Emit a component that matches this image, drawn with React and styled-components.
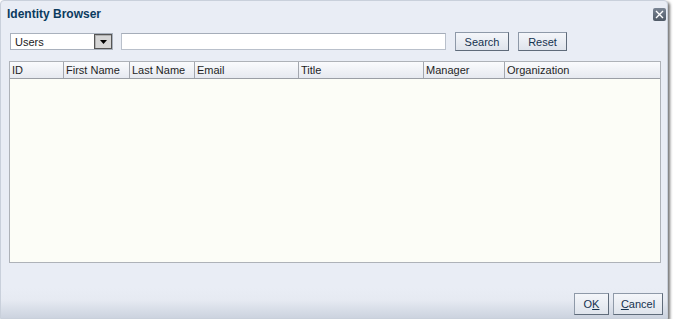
import React from "react";
import styled, { createGlobalStyle } from "styled-components";

const Global = createGlobalStyle`
  html, body { margin: 0; padding: 0; background: #ffffff; }
  body { font-family: "Liberation Sans", Arial, sans-serif; font-size: 11px; }
`;

const Dialog = styled.div`
  box-sizing: border-box;
  width: 668px;
  height: 319px;
  background: #e9edf5;
  border: 1px solid #c9d0db;
  border-radius: 4px 4px 0 0;
  box-shadow: 2px 2px 3px rgba(0, 0, 0, 0.55);
  display: flex;
  flex-direction: column;
  overflow: hidden;
`;

const TitleBar = styled.div`
  height: 25px;
  display: flex;
  align-items: center;
  justify-content: space-between;
  padding: 0 1px 0 6px;
  flex: none;
`;

const Title = styled.div`
  font-weight: bold;
  font-size: 12px;
  color: #0b3b5e;
`;

const CloseButton = styled.div`
  width: 13px;
  height: 13px;
  background: linear-gradient(#7a8594, #4f5966);
  border-radius: 2px;
  display: flex;
  align-items: center;
  justify-content: center;
  margin-top: 1px;
`;

const Toolbar = styled.div`
  display: flex;
  align-items: center;
  margin: 6px 0 0 9px;
  height: 19px;
  flex: none;
`;

const Select = styled.div`
  box-sizing: border-box;
  width: 103px;
  height: 17px;
  background: #ffffff;
  border: 1px solid #a9b1bd;
  display: flex;
  align-items: center;
  justify-content: space-between;
  padding-left: 4px;
  color: #1a1a1a;
`;

const ArrowBox = styled.div`
  box-sizing: border-box;
  width: 18px;
  height: 15px;
  background: #d6d6d6;
  border: 1px solid #555;
  box-shadow: inset 1px 1px 0 #b0b0b0;
  display: flex;
  align-items: center;
  justify-content: center;
`;

const TextInput = styled.div`
  box-sizing: border-box;
  width: 325px;
  height: 17px;
  margin-left: 8px;
  background: #ffffff;
  border: 1px solid #b9c0cb;
  border-top-color: #a5adb9;
`;

const Button = styled.div`
  box-sizing: border-box;
  width: ${(p) => p.$w}px;
  height: ${(p) => p.$h || 19}px;
  margin-left: ${(p) => p.$ml || 0}px;
  display: flex;
  align-items: center;
  justify-content: center;
  background: linear-gradient(#f4f6fa, #dfe4ec);
  border: 1px solid #8e99a8;
  border-right-color: #5f6b7a;
  border-bottom-color: #5f6b7a;
  color: #15324f;
  font-size: 11px;
`;

const Table = styled.div`
  box-sizing: border-box;
  margin: 10px 0 0 8px;
  width: 652px;
  height: 202px;
  border: 1px solid #aeb2b8;
  background: #fcfdf7;
  flex: none;
  display: flex;
  flex-direction: column;
`;

const HeaderRow = styled.div`
  display: flex;
  height: 16px;
  border-bottom: 1px solid #9a9ea5;
  background: linear-gradient(#fafbfd, #e6e9f0);
`;

const HeaderCell = styled.div`
  box-sizing: border-box;
  width: ${(p) => (p.$w ? `${p.$w}px` : "auto")};
  flex: ${(p) => (p.$w ? "none" : "1")};
  border-right: ${(p) => (p.$last ? "none" : "1px solid #a3a7ae")};
  padding-left: 2px;
  display: flex;
  align-items: center;
  color: #1f1f1f;
  white-space: nowrap;
`;

const Footer = styled.div`
  margin-top: auto;
  height: 30px;
  display: flex;
  justify-content: flex-end;
  align-items: flex-start;
  padding: 5px 4px 0 0;
  box-sizing: border-box;
  background: linear-gradient(#e9edf5 0, #e6eaf2 40%, #ccd3df 100%);
  gap: 4px;
`;

const columns = [
  ["ID", 54],
  ["First Name", 66],
  ["Last Name", 65],
  ["Email", 104],
  ["Title", 125],
  ["Manager", 81],
  ["Organization", 0],
];

export default function App() {
  return (
    <>
      <Global />
      <Dialog>
        <TitleBar>
          <Title>Identity Browser</Title>
          <CloseButton>
            <svg width="9" height="9" viewBox="0 0 9 9">
              <path d="M1 1 L8 8 M8 1 L1 8" stroke="#fff" strokeWidth="1.4" />
            </svg>
          </CloseButton>
        </TitleBar>
        <Toolbar>
          <Select>
            <span>Users</span>
            <ArrowBox>
              <svg width="7" height="4" viewBox="0 0 7 4">
                <path d="M0 0 H7 L3.5 4 Z" fill="#000" />
              </svg>
            </ArrowBox>
          </Select>
          <TextInput />
          <Button $w={54} $ml={9}>Search</Button>
          <Button $w={49} $ml={9}>Reset</Button>
        </Toolbar>
        <Table>
          <HeaderRow>
            {columns.map(([name, w], i) => (
              <HeaderCell key={name} $w={w} $last={i === columns.length - 1}>
                {name}
              </HeaderCell>
            ))}
          </HeaderRow>
        </Table>
        <Footer>
          <Button $w={35} $h={22}>
            <span>O<u>K</u></span>
          </Button>
          <Button $w={50} $h={22}>
            <span><u>C</u>ancel</span>
          </Button>
        </Footer>
      </Dialog>
    </>
  );
}
